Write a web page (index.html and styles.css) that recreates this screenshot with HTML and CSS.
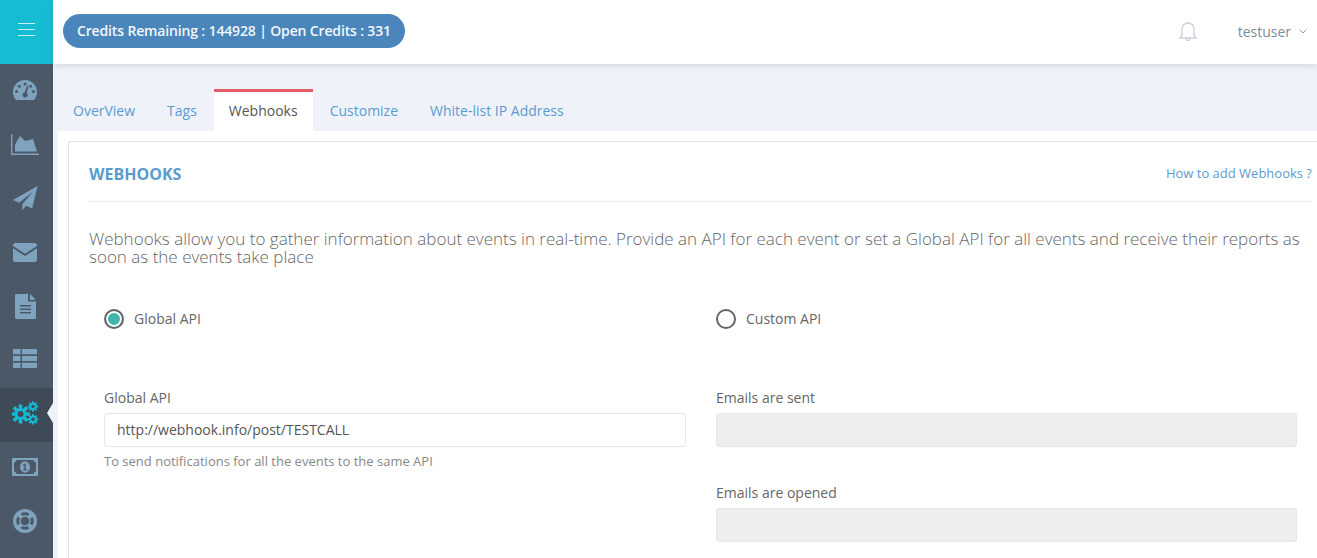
FILE: index.html
```html
<!DOCTYPE html>
<html lang="en">
<head>
<meta charset="utf-8">
<title>Webhooks</title>
<link rel="stylesheet" href="styles.css">
</head>
<body>
<div class="app">
  <aside class="sidebar">
    <div class="burger"><span></span><span></span><span></span></div>
    <nav class="side-nav">
      <a class="side-item side-item-top"><svg viewBox="0 0 24 20" width="24" height="20"><path class="ic" fill-rule="evenodd" d="M12 0C5.400 0 0 5.200 0 11.700c0 2.500.8 5.200 2.200 7.400.3.500.8.900 1.400.900h16.800c.6 0 1.100-.4 1.400-.9 1.400-2.200 2.200-4.900 2.200-7.400C24 5.200 18.600 0 12 0zM12 2.400a1.500 1.500 0 1 1 0 3 1.500 1.500 0 0 1 0-3zM6.300 4.700a1.500 1.500 0 1 1 0 3 1.500 1.500 0 0 1 0-3zM17.700 4.700a1.500 1.500 0 1 1 0 3 1.500 1.500 0 0 1 0-3zM3.500 10a1.500 1.500 0 1 1 0 3 1.500 1.500 0 0 1 0-3zM20.500 10a1.500 1.500 0 1 1 0 3 1.500 1.500 0 0 1 0-3zM14.300 5.300l1.300.4-1.900 7.200c.7.500 1 1.200 1 2 0 1.400-1.200 2.500-2.600 2.500s-2.600-1.100-2.600-2.500c0-1.300.9-2.400 2.200-2.600z"/></svg></a>
      <a class="side-item side-item-top"><svg viewBox="0 0 28 21" width="28" height="21"><path class="ic" d="M0 0h1.400v19.600H28V21H0z"/><path class="ic" d="M4 17.500V10.500L9 2l5 5 8-2 4 12.500z"/></svg></a>
      <a class="side-item side-item-top"><svg viewBox="0 0 25 25" width="25" height="25"><path class="ic" d="M24.500 0 0 14l6.200 2.700L20 5.500 9.300 18.200v6.300l3.600-4.700 6.300 2.700z"/></svg></a>
      <a class="side-item side-item-top"><svg viewBox="0 0 24 19" width="24" height="19"><path class="ic" d="M2.200 0h19.600C23 0 24 1 24 2.200v.8L12 10.700 0 3v-.8C0 1 1 0 2.200 0z"/><path class="ic" d="M0 5.300v11.500C0 18 1 19 2.200 19h19.600c1.200 0 2.200-1 2.200-2.200V5.300l-12 7.800z"/></svg></a>
      <a class="side-item side-item-top"><svg viewBox="0 0 21 25" width="21" height="25"><path class="ic" fill-rule="evenodd" d="M1.500 0H13v7.500h8v16c0 .8-.7 1.500-1.500 1.500h-18C.7 25 0 24.300 0 23.500v-22C0 .7.700 0 1.500 0zM5 11v1.500h11V11zM5 14.500V16h11v-1.500zM5 18v1.500h11V18z"/><path class="ic" d="M15 0l6 5.800h-6z"/></svg></a>
      <a class="side-item"><svg viewBox="0 0 24 19" width="24" height="19"><path class="ic" d="M1 0h6.500v5.300H0V1C0 .4.400 0 1 0zM9 0h14c.6 0 1 .4 1 1v4.300H9zM0 6.900h7.500v5.200H0zM9 6.900h15v5.200H9zM0 13.700h7.500V19H1c-.6 0-1-.4-1-1zM9 13.700h15V18c0 .6-.4 1-1 1H9z"/></svg></a>
      <a class="side-item is-active"><svg viewBox="0 0 27 24" width="27" height="24"><g class="gear"><path d="M8.500 3.500v19M-1 13h19M1.800 6.300l13.400 13.400M15.200 6.300 1.800 19.700" stroke-width="3.600"/><circle cx="8.500" cy="13" r="5.800" fill="#17b8d2" stroke="none"/><circle class="hole" cx="8.500" cy="13" r="3"/></g><g class="gear"><path d="M21 .2v10.600M15.700 5.500h10.600M17.300 1.800l7.400 7.400M24.700 1.800l-7.400 7.400" stroke-width="1.900"/><circle cx="21" cy="5.500" r="3.700" fill="#17b8d2" stroke="none"/><circle class="hole" cx="21" cy="5.500" r="1.700"/></g><g class="gear"><path d="M21 13v10.600M15.700 18.300h10.600M17.300 14.600l7.400 7.400M24.700 14.600 17.300 22" stroke-width="1.900"/><circle cx="21" cy="18.300" r="3.700" fill="#17b8d2" stroke="none"/><circle class="hole" cx="21" cy="18.300" r="1.700"/></g></svg></a>
      <a class="side-item"><svg viewBox="0 0 26 18" width="26" height="18"><path class="ic" d="M0 0h26v18H0z"/><path class="cut" d="M4.500 2h17c.3 1.300 1.200 2.200 2.500 2.500v9c-1.300.3-2.200 1.200-2.500 2.500h-17c-.3-1.300-1.200-2.200-2.500-2.500v-9C3.300 4.200 4.200 3.300 4.500 2z"/><ellipse class="ic" cx="13" cy="9" rx="5" ry="5.800"/><path class="cut" d="M13.800 5.200v6.200h1.300v1.100h-4.200v-1.100h1.400V7.300l-1.400.6V6.700z"/></svg></a>
      <a class="side-item"><svg viewBox="0 0 24 24" width="24" height="24"><circle class="ic" cx="12" cy="12" r="12"/><circle class="arc" cx="12" cy="12" r="7.200" stroke-width="3" stroke-dasharray="7.300 4" stroke-dashoffset="3.650"/><circle class="cut" cx="12" cy="12" r="4.300"/></svg></a>
    </nav>
  </aside>
  <div class="main">
    <header class="topbar">
      <div class="credits">Credits Remaining : 144928 | Open Credits : 331</div>
      <div class="top-right">
        <svg class="bell" viewBox="0 0 18 20" width="18" height="20"><path d="M3 14.500V8a6 6 0 0 1 12 0v6.500l2 1.800v.7H1v-.7zM7 17.500c0 2.700 4 2.700 4 0M9 2V1" fill="none" stroke="#c9d0d8" stroke-width="1.300"/></svg>
        <span class="user">testuser</span>
        <svg class="chev" viewBox="0 0 8 5" width="8" height="5"><path d="M.5.500 4 4 7.500.500" fill="none" stroke="#8a97a6" stroke-width="1"/></svg>
      </div>
    </header>
    <div class="tabs">
      <a class="tab">OverView</a>
      <a class="tab">Tags</a>
      <a class="tab tab-active">Webhooks</a>
      <a class="tab">Customize</a>
      <a class="tab">White-list IP Address</a>
    </div>
    <div class="panel">
      <section class="card">
        <div class="card-head">
          <h2 class="card-title">WEBHOOKS</h2>
          <a class="help">How to add Webhooks ?</a>
        </div>
        <p class="intro">Webhooks allow you to gather information about events in real-time. Provide an API for each event or set a Global API for all events and receive their reports as soon as the events take place</p>
        <div class="form-grid">
          <label class="radio-line"><span class="radio radio-on"></span>Global API</label>
          <label class="radio-line"><span class="radio"></span>Custom API</label>
          <div class="col">
            <div class="field">
              <div class="field-label">Global API</div>
              <div class="input">http://webhook.info/post/TESTCALL</div>
              <div class="hint">To send notifications for all the events to the same API</div>
            </div>
          </div>
          <div class="col">
            <div class="field">
              <div class="field-label">Emails are sent</div>
              <div class="input input-off"></div>
            </div>
            <div class="field">
              <div class="field-label">Emails are opened</div>
              <div class="input input-off"></div>
            </div>
          </div>
        </div>
      </section>
    </div>
  </div>
</div>
</body>
</html>
```

FILE: styles.css
```css
* { box-sizing: border-box; }
html, body { margin: 0; height: 100%; overflow: hidden; }
body { font-family: "Open Sans", sans-serif; background: #eff3f9; color: #555; }
.app { display: flex; height: 558px; }

.sidebar { width: 53px; flex: none; background: #4b5867; display: flex; flex-direction: column; }
.burger { height: 64px; background: #16bcd4; display: flex; flex-direction: column; justify-content: center; align-items: center; gap: 5px; padding-bottom: 5px; }
.burger span { display: block; width: 17px; height: 1px; background: #c8eff5; }
.side-nav { display: flex; flex-direction: column; }
.side-item { height: 54px; display: flex; align-items: center; justify-content: center; position: relative; padding: 0 3px 5px 0; }
.side-item-top { padding-bottom: 2px; }
.side-item svg { display: block; }
.ic { fill: #7fa3be; }
.cut { fill: #4b5867; }
.arc { fill: none; stroke: #4b5867; }
.is-active { background: #3f4a57; }
.is-active::after { content: ""; position: absolute; right: 0; top: 15px; border: 10px solid transparent; border-left: 0; border-right: 6px solid #eff3f9; }
.gear { stroke: #17b8d2; }
.hole { fill: #3f4a57; stroke: none; }

.main { flex: 1; min-width: 0; display: flex; flex-direction: column; }
.topbar { height: 64px; flex: none; background: #fff; display: flex; align-items: center; justify-content: space-between; padding: 0 0 2px 10px; box-shadow: 0 2px 6px rgba(60,70,90,.14); position: relative; }
.credits { height: 34px; padding: 0 14px; border-radius: 17px; background: #4a86bb; color: #f2f7fb; font-size: 14px; font-weight: 600; letter-spacing: -0.15px; line-height: 34px; white-space: nowrap; }
.top-right { display: flex; align-items: center; padding-right: 10px; }
.bell { margin-right: 41px; }
.user { font-size: 14px; color: #7d8b9a; margin-right: 8px; }
.chev { margin-top: 1px; }

.tabs { height: 67px; flex: none; display: flex; align-items: flex-end; padding-left: 4px; }
.tab { height: 42px; padding: 3px 16px 0; font-size: 14px; line-height: 37px; color: #5b9bcf; white-space: nowrap; }
.tab-active { background: #fff; color: #555; border-top: 3px solid #e8596a; padding: 0 15px; margin: 0 1px 0 1px; }

.panel { flex: 1; margin-left: 5px; background: #fff; padding: 10px 0 0 10px; min-height: 0; }
.card { height: 100%; border: 1px solid #eadfe6; border-right: 0; border-bottom: 0; border-radius: 3px 0 0 0; padding: 0 5px 0 20px; }
.card-head { height: 60px; display: flex; align-items: center; justify-content: space-between; border-bottom: 1px solid #ececec; padding-top: 3px; }
.card-title { margin: 2px 0 0; font-size: 16px; font-weight: 700; color: #5b9bcf; }
.help { font-size: 13px; color: #5b9bcf; }
.intro { margin: 28px 0 0; font-size: 17px; font-weight: 300; line-height: 18px; color: #666; }
.form-grid { display: grid; grid-template-columns: 582px 581px; column-gap: 30px; padding-left: 15px; }
.radio-line { height: 122px; padding-top: 43px; display: flex; align-items: flex-start; gap: 10px; font-size: 14px; line-height: 20px; color: #666; }
.radio { width: 20px; height: 20px; border-radius: 50%; border: 2px solid #666; flex: none; background: #fff; }
.radio-on { background: #3fb5ac; box-shadow: inset 0 0 0 2px #fff; }
.field { margin-bottom: 36px; }
.field-label { font-size: 14px; line-height: 19px; color: #666; margin-bottom: 6px; }
.input { height: 34px; border: 1px solid #e6e6e6; border-radius: 3px; padding: 0 12px; font-size: 14px; line-height: 32px; color: #555; }
.input-off { background: #eee; }
.hint { margin-top: 6px; font-size: 13px; line-height: 17px; color: #888; }
```
